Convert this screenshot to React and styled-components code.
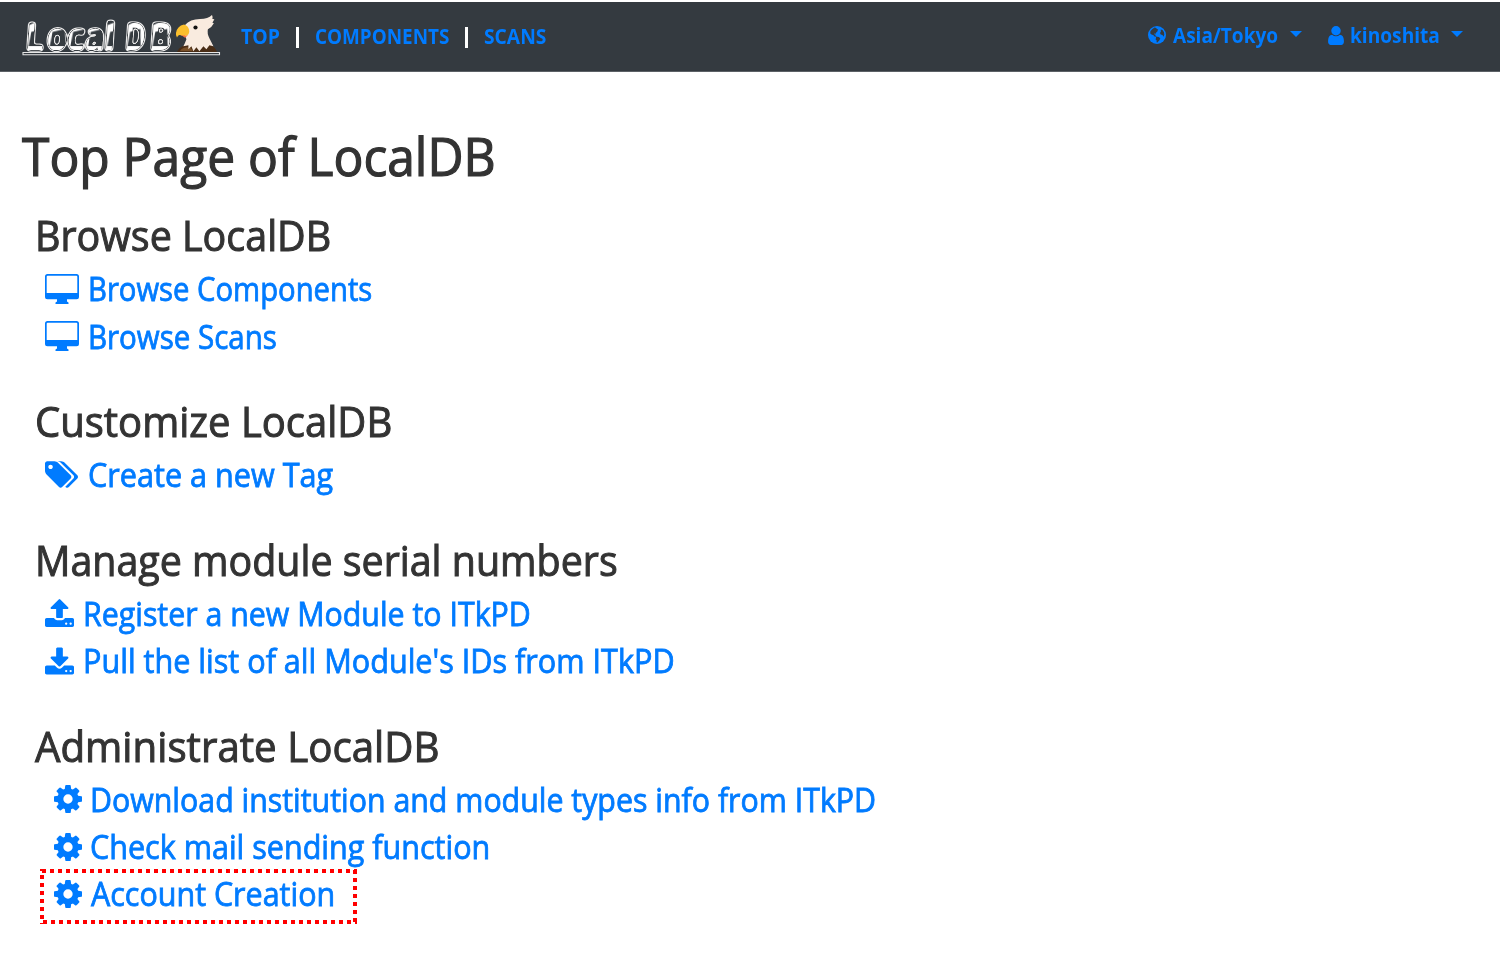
import React from 'react';
import styled, { createGlobalStyle } from 'styled-components';

const GlobalStyle = createGlobalStyle`
  * { box-sizing: border-box; }
  body {
    margin: 0;
    background: #fff;
    color: #333;
    font-family: 'Open Sans', 'Noto Sans', sans-serif;
    font-weight: 400;
  }
`;

const Page = styled.div`
  height: 972px;
  padding-top: 2px;
  overflow: hidden;
`;

const NavBar = styled.nav`
  display: flex;
  justify-content: space-between;
  height: 70px;
  padding: 0 37px 0 22px;
  background: #343a40;
  border-bottom: 1px solid #5c6166;
  font-size: 20.8px;
  font-weight: 700;
  white-space: nowrap;
`;

const NavGroup = styled.div`
  display: flex;
  align-items: center;
  height: ${p => p.$height}px;
`;

const Logo = styled.svg`
  display: block;
  width: 200px;
  height: 46px;
  margin-right: 19px;
  overflow: visible;
`;

const NavLink = styled.a`
  color: #007bff;
  width: ${p => p.$width}px;
`;

const Condensed = styled.span`
  display: inline-block;
  transform: scaleX(${p => p.$scale});
  transform-origin: 0 50%;
`;

const Divider = styled.span`
  width: 3px;
  height: 21px;
  margin: 3px 16px 0 15px;
  background: #fff;
`;

const Dropdown = styled.a`
  display: flex;
  align-items: center;
  color: #007bff;
  margin-left: ${p => p.$gap || 0}px;

  &::after {
    content: '';
    border: 6px solid transparent;
    border-top-color: #007bff;
    border-bottom: 0;
    margin-top: -2px;
  }
`;

const DropdownLabel = styled.span`
  width: ${p => p.$width}px;
  margin-left: ${p => p.$gap}px;
`;

const Main = styled.main`
  padding: 48px 22px 0;
  white-space: nowrap;
`;

const Title = styled.h1`
  margin: 0 0 17.4px;
  font-size: 52.5px;
  line-height: 72px;
  font-weight: 400;
  -webkit-text-stroke: 1.2px currentColor;
`;

const Section = styled.section`
  margin: 0 0 35.6px 13px;
`;

const Heading = styled.h2`
  margin: 0 0 3.6px;
  font-size: 41.6px;
  line-height: 52px;
  font-weight: 400;
  -webkit-text-stroke: 1px currentColor;
`;

const Item = styled.div`
  position: relative;
  display: flex;
  align-items: center;
  height: 47.4px;
  padding-left: ${p => p.$indent || 10}px;
  color: #007bff;
  font-size: 32px;
`;

const ItemLink = styled.a`
  margin-left: ${p => p.$gap}px;
  -webkit-text-stroke: 0.8px currentColor;
`;

const Icon = styled.svg`
  display: block;
  flex: none;
  fill: currentColor;
`;

const Highlight = styled.div`
  position: absolute;
  left: 5px;
  top: -1.500px;
  width: 317px;
  height: 55px;
  background:
    repeating-linear-gradient(90deg, transparent 0 2px, #f00 2px 6px, transparent 6px 8px) 0 0 / 100% 4px no-repeat,
    repeating-linear-gradient(90deg, transparent 0 3px, #f00 3px 7px, transparent 7px 8px) 0 100% / 100% 4px no-repeat,
    repeating-linear-gradient(180deg, #f00 0 2px, transparent 2px 6px, #f00 6px 8px) 0 0 / 4px 100% no-repeat,
    repeating-linear-gradient(180deg, transparent 0 1px, #f00 1px 5px, transparent 5px 8px) 100% 0 / 4px 100% no-repeat;
`;

const paths = {
  cog: 'M1152 896q0-106-75-181t-181-75-181 75-75 181 75 181 181 75 181-75 75-181zm512-109v222q0 12-8 23t-20 13l-185 28q-19 54-39 91 35 50 107 138 10 12 10 25t-9 23q-27 37-99 108t-94 71q-12 0-26-9l-138-108q-44 23-91 38-16 136-29 186-7 28-36 28h-222q-14 0-24.500-8.500t-11.500-21.500l-28-184q-49-16-90-37l-141 107q-10 9-25 9-14 0-25-11-126-114-165-168-7-10-7-23 0-12 8-23 15-21 51-66.500t54-70.500q-27-50-41-99l-183-27q-13-2-21-12.500t-8-23.500v-222q0-12 8-23t19-13l186-28q14-46 39-92-40-57-107-138-10-12-10-24 0-10 9-23 26-36 98.500-107.500t94.500-71.500q13 0 26 10l138 107q44-23 91-38 16-136 29-186 7-28 36-28h222q14 0 24.500 8.500t11.500 21.500l28 184q49 16 90 37l142-107q9-9 24-9 13 0 25 10 129 119 165 170 7 8 7 22 0 12-8 23-15 21-51 66.500t-54 70.500q26 50 41 98l183 28q13 2 21 12.500t8 23.500z',
  user: 'M1536 1399q0 109-62.500 187t-150.500 78h-854q-88 0-150.500-78t-62.500-187q0-85 8.500-160.500t31.500-152 58.500-131 94-89 134.500-34.500q131 128 313 128t313-128q76 0 134.500 34.500t94 89 58.500 131 31.500 152 8.500 160.500zm-256-887q0 159-112.500 271.500t-271.500 112.500-271.500-112.500-112.500-271.500 112.500-271.500 271.500-112.500 271.500 112.500 112.500 271.500z',
  tags: 'M448 448q0-53-37.500-90.500t-90.500-37.500-90.500 37.500-37.500 90.500 37.500 90.500 90.500 37.500 90.500-37.500 37.500-90.500zm1067 576q0 53-37 90l-491 492q-39 37-91 37-53 0-90-37l-715-716q-38-37-64.500-101t-26.500-117v-416q0-52 38-90t90-38h416q53 0 117 26.500t102 64.500l715 714q37 39 37 91zm384 0q0 53-37 90l-491 492q-39 37-91 37-36 0-59-14t-53-45l470-470q37-37 37-90 0-52-37-91l-715-714q-38-38-102-64.500t-117-26.500h224q53 0 117 26.500t102 64.500l715 714q37 39 37 91z',
  upload: 'M1344 1472q0-26-19-45t-45-19-45 19-19 45 19 45 45 19 45-19 19-45zm256 0q0-26-19-45t-45-19-45 19-19 45 19 45 45 19 45-19 19-45zm128-224v320q0 40-28 68t-68 28h-1472q-40 0-68-28t-28-68v-320q0-40 28-68t68-28h427q21 56 70.500 92t110.500 36h256q61 0 110.500-36t70.500-92h427q40 0 68 28t28 68zm-325-648q-17 40-59 40h-256v448q0 26-19 45t-45 19h-256q-26 0-45-19t-19-45v-448h-256q-42 0-59-40-17-39 14-69l448-448q18-19 45-19t45 19l448 448q31 30 14 69z',
  download: 'M1344 1344q0-26-19-45t-45-19-45 19-19 45 19 45 45 19 45-19 19-45zm256 0q0-26-19-45t-45-19-45 19-19 45 19 45 45 19 45-19 19-45zm128-224v320q0 40-28 68t-68 28h-1472q-40 0-68-28t-28-68v-320q0-40 28-68t68-28h465l135 136q58 56 136 56t136-56l136-136h464q40 0 68 28t28 68zm-325-569q17 41-14 70l-448 448q-18 19-45 19t-45-19l-448-448q-31-29-14-70 17-39 59-39h256v-448q0-26 19-45t45-19h256q26 0 45 19t19 45v448h256q42 0 59 39z',
};

const CogIcon = () => <Icon width="28" height="28" viewBox="128 128 1536 1536"><path d={paths.cog} /></Icon>;
const UserIcon = () => <Icon width="16" height="19" viewBox="256 128 1280 1536"><path d={paths.user} /></Icon>;
const TagsIcon = () => <Icon width="33" height="27" viewBox="0 128 1899 1515"><path d={paths.tags} /></Icon>;
const UploadIcon = () => <Icon width="29" height="28" viewBox="64 64 1664 1600"><path d={paths.upload} /></Icon>;
const DownloadIcon = () => <Icon width="29" height="28" viewBox="64 0 1664 1536"><path d={paths.download} /></Icon>;
const MonitorIcon = () => (
  <Icon width="34" height="30" viewBox="0 0 34 30">
    <path fillRule="evenodd" d="M2.500 0h29A2.500 2.500 0 0 1 34 2.500v20.200a2.500 2.500 0 0 1-2.500 2.500H22v2.300l1.500 1v1.500h-13v-1.500l1.500-1v-2.300H2.500A2.500 2.500 0 0 1 0 22.700V2.500A2.500 2.500 0 0 1 2.500 0zM2.700 1.700a1 1 0 0 0-1 1V19h30.600V2.700a1 1 0 0 0-1-1z" />
  </Icon>
);
const GlobeIcon = () => (
  <Icon width="18" height="18" viewBox="0 0 18 18">
    <circle cx="9" cy="9" r="9" />
    <path fill="#343a40" d="M6.500 1.600 4.200 3.200 2.400 5.200 2.300 7.400l1.600 1.300 1.500.3.600 1.300 1.900.5.200 1.100-.6 1.300 1.200 1.300-.2 1.700.9.300 2.200-2.400.7-1.900-1.500-1.100-2-.4-1.200-.8-.2-1.300-1.100-.2.300-1.100 1.300.4.300-1.300 1.600-1.500-.3-1.100.9-.7-1.700-.2-.4-1zM12.700 3.600l1.800.4 1.500 2.300.3 2.500-.8 1.900-1-1.800-1.800-.3-.7-1.600.9-1.500z" />
  </Icon>
);

const logoLetters = [
  ['L', 3, 0.84], ['o', 24, 0.88], ['c', 44.5, 0.9], ['a', 62.5, 0.84], ['l', 81, 1], ['D', 102.5, 0.72], ['B', 127, 0.84],
];

const LocalDbLogo = () => (
  <Logo viewBox="0 0 200 46">
    <defs>
      <pattern id="patches" width="41" height="44" patternUnits="userSpaceOnUse">
        <rect width="41" height="44" fill="#fff" />
        <path d="M3 0h11l-3 16-8 3zM6 26l14-3 2 17H4zM33 6l8-2v14l-6 4z" fill="#343a40" />
      </pattern>
      <filter id="outline" x="-5%" y="-20%" width="110%" height="140%">
        <feGaussianBlur in="SourceAlpha" stdDeviation="1.7" result="soft" />
        <feComponentTransfer in="soft" result="outer">
          <feFuncA type="linear" slope="8" intercept="-0.5" />
        </feComponentTransfer>
        <feComponentTransfer in="soft" result="inner">
          <feFuncA type="linear" slope="8" intercept="-2" />
        </feComponentTransfer>
        <feFlood floodColor="#e8e8e8" result="white" />
        <feComposite in="white" in2="outer" operator="in" result="edge" />
        <feFlood floodColor="#343a40" result="dark" />
        <feComposite in="dark" in2="inner" operator="in" result="body" />
        <feMerge>
          <feMergeNode in="edge" />
          <feMergeNode in="body" />
          <feMergeNode in="SourceGraphic" />
        </feMerge>
      </filter>
    </defs>
    <g filter="url(#outline)" fill="url(#patches)" fontFamily="'Open Sans', sans-serif" fontWeight="700" fontSize="38">
      {logoLetters.map(([ch, x, scale]) => (
        <text key={ch} transform={`translate(${x} 37) skewX(-4) scale(${scale} 1)`}>{ch}</text>
      ))}
    </g>
    <path d="M1 39.500h196.500v2.200H1z" fill="#343a40" stroke="#e6e6e6" strokeWidth="1.100" />
    <path d="M155 39q2-6 11-7.500l20-.5q7 2 9 8z" fill="#4a2d16" />
    <path d="M158 38q2-4 10-4l3 4z" fill="#795029" />
    <path d="M163 12q5-6 15-6 4 0 7-1 3-1 5-3 1 2 .4 4l2 .3-2 3.500 1.500.5q-2 4-6 6-1 4 1.500 9l4 8-4-1-3 4-3-3-4 5-3-4-3 4-2-5-3 3v-4l-5 1q2-4 3-7l-3-8z" fill="#f9ebdf" />
    <path d="M154 20q1-7 8-8.500 4 1 5 5 1 4-2 6-4 1-7-.5-2-.5-3 2.500-1.500-2-1-4.500z" fill="#fbbf2d" />
    <path d="M159 22q4 1.200 7 .3l-3 2.500z" fill="#ff7043" />
    <circle cx="173.500" cy="14.500" r="2.100" fill="#111" />
  </Logo>
);

export default function App() {
  return (
    <Page>
      <GlobalStyle />
      <NavBar>
        <NavGroup $height={68}>
          <LocalDbLogo />
          <NavLink $width={40}><Condensed $scale={0.935}>TOP</Condensed></NavLink>
          <Divider />
          <NavLink $width={135}><Condensed $scale={0.908}>COMPONENTS</Condensed></NavLink>
          <Divider />
          <NavLink $width={63}><Condensed $scale={0.925}>SCANS</Condensed></NavLink>
        </NavGroup>
        <NavGroup $height={66}>
          <Dropdown>
            <GlobeIcon />
            <DropdownLabel $gap={7} $width={117}><Condensed $scale={0.916}>Asia/Tokyo</Condensed></DropdownLabel>
          </Dropdown>
          <Dropdown $gap={26}>
            <UserIcon />
            <DropdownLabel $gap={6} $width={101}><Condensed $scale={0.92}>kinoshita</Condensed></DropdownLabel>
          </Dropdown>
        </NavGroup>
      </NavBar>
      <Main>
        <Title><Condensed $scale={0.947}>Top Page of LocalDB</Condensed></Title>
        <Section>
          <Heading><Condensed $scale={0.948}>Browse LocalDB</Condensed></Heading>
          <Item><MonitorIcon /><ItemLink $gap={9}><Condensed $scale={0.914}>Browse Components</Condensed></ItemLink></Item>
          <Item><MonitorIcon /><ItemLink $gap={9}><Condensed $scale={0.922}>Browse Scans</Condensed></ItemLink></Item>
        </Section>
        <Section>
          <Heading><Condensed $scale={0.962}>Customize LocalDB</Condensed></Heading>
          <Item><TagsIcon /><ItemLink $gap={10}><Condensed $scale={0.957}>Create a new Tag</Condensed></ItemLink></Item>
        </Section>
        <Section>
          <Heading><Condensed $scale={0.947}>Manage module serial numbers</Condensed></Heading>
          <Item><UploadIcon /><ItemLink $gap={9}><Condensed $scale={0.948}>Register a new Module to ITkPD</Condensed></ItemLink></Item>
          <Item><DownloadIcon /><ItemLink $gap={9}><Condensed $scale={0.956}>Pull the list of all Module's IDs from ITkPD</Condensed></ItemLink></Item>
        </Section>
        <Section>
          <Heading><Condensed $scale={0.968}>Administrate LocalDB</Condensed></Heading>
          <Item $indent={19}><CogIcon /><ItemLink $gap={8}><Condensed $scale={0.948}>Download institution and module types info from ITkPD</Condensed></ItemLink></Item>
          <Item $indent={19}><CogIcon /><ItemLink $gap={8}><Condensed $scale={0.954}>Check mail sending function</Condensed></ItemLink></Item>
          <Item $indent={19}><CogIcon /><ItemLink $gap={9}><Condensed $scale={0.952}>Account Creation</Condensed></ItemLink><Highlight /></Item>
        </Section>
      </Main>
    </Page>
  );
}
